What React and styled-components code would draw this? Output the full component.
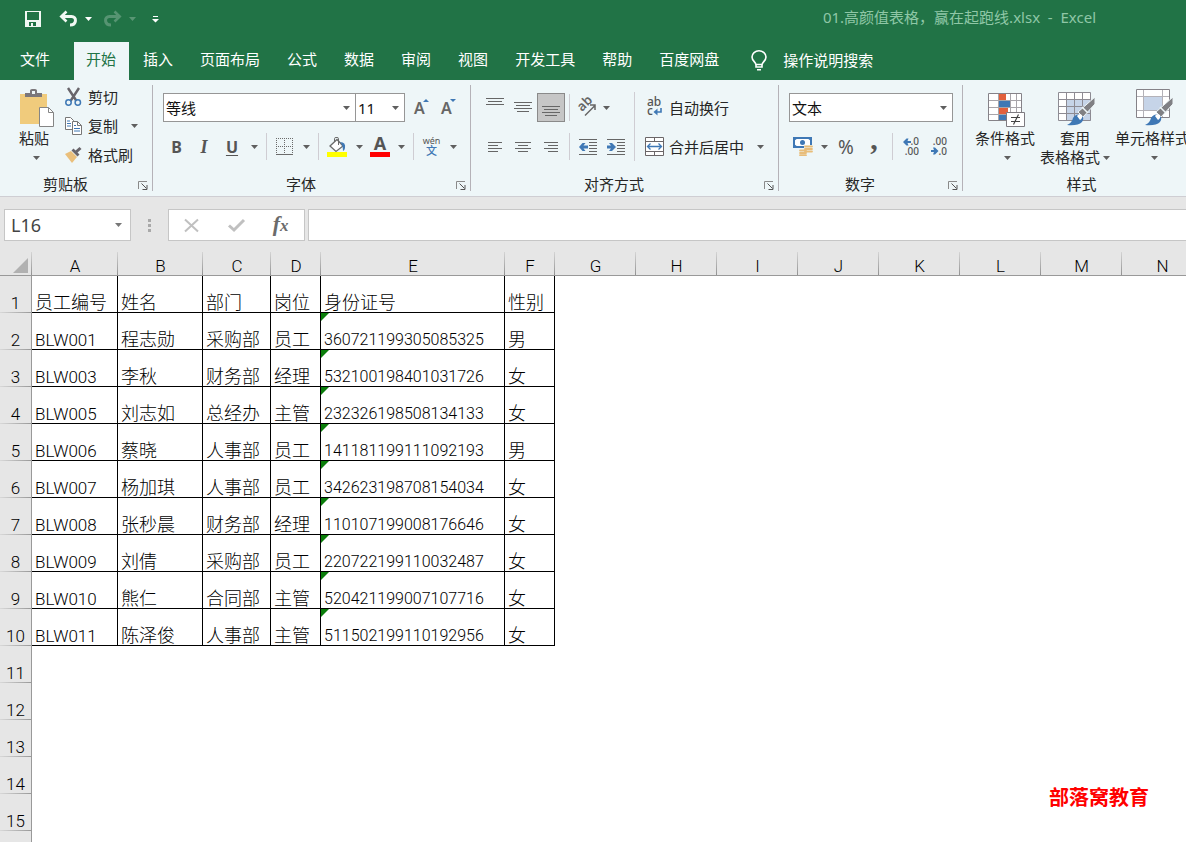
import React from "react";
import styled, { createGlobalStyle, css } from "styled-components";

const UI = `"Noto Sans", "Noto Sans CJK SC", sans-serif`;
const INK = "#262626";
const BLUE = "#3f78b5";

const Global = createGlobalStyle`
  *, *::before, *::after { box-sizing: border-box; }
  body { margin: 0; overflow: hidden; background: #fff; }
  button, input, select { font: inherit; color: inherit; border: 0; background: none; margin: 0; padding: 0; border-radius: 0; }
  svg { display: block; flex: none; overflow: visible; }
`;

const Window = styled.div`
  display: flex;
  flex-direction: column;
  height: 100vh;
  font: 15px/20px ${UI};
  color: ${INK};
`;

/* ---------- title bar and tabs ---------- */
const TitleBar = styled.header`
  display: flex;
  align-items: center;
  flex: none;
  height: 42px;
  padding: 0 90px 4px 24px;
  background: #217346;
  color: #f2f8f4;
`;
const QuickButton = styled.button`
  display: grid;
  place-items: center;
  height: 24px;
  width: ${(p) => p.$w}px;
  margin-right: ${(p) => p.$gap || 0}px;
  opacity: ${(p) => (p.disabled ? 0.25 : 1)};
`;
const FileTitle = styled.h1`
  margin: 0 0 0 auto;
  padding-bottom: 4px;
  font: 15px/20px ${UI};
  white-space: pre;
  color: #8fc7a6;
`;
const TabBar = styled.nav`
  display: flex;
  flex: none;
  height: 38px;
  background: #217346;
  color: #fff;
  overflow: hidden;
`;
const Tab = styled.button`
  flex: none;
  padding: 0 13px 4px 14px;
  ${(p) => p.$file && css`padding-left: 20px; padding-right: 12px; margin-right: 12px;`}
  ${(p) => p.$active && css`padding-left: 12px; background: #eef6f8; color: #217346;`}
`;
const TellMe = styled.button`
  display: flex;
  align-items: center;
  flex: none;
  gap: 16px;
  margin-left: 19px;
  padding-bottom: 2px;
`;

/* ---------- ribbon ---------- */
const Ribbon = styled.section`
  display: flex;
  flex: none;
  height: 117px;
  padding: 5px 0;
  background: #eef6f8;
  border-bottom: 1px solid #cfced3;
  overflow: hidden;
`;
const Group = styled.div`
  display: flex;
  flex-direction: column;
  flex: none;
  height: 106px;
  width: ${(p) => p.$w}px;
  border-right: 1px solid #b5b2b8;
`;
const GroupBody = styled.div`
  display: flex;
  flex: 1;
  padding-left: ${(p) => p.$left}px;
`;
const GroupFooter = styled.div`
  display: flex;
  align-items: center;
  height: 13px;
  padding-right: ${(p) => (p.$plain ? 0 : 4)}px;
`;
const GroupLabel = styled.span`
  flex: 1;
  line-height: 13px;
  text-align: center;
`;
const Launcher = styled.button`
  margin-left: 7px;
  padding-top: 2px;
`;
const Rows = styled.div`
  display: flex;
  flex-direction: column;
  gap: 10px;
  padding-top: 8px;
`;
const Row = styled.div`
  display: flex;
  align-items: center;
  height: ${(p) => p.$h || 29}px;
`;
const Tool = styled.button`
  display: grid;
  place-items: center;
  height: 29px;
  width: ${(p) => p.$w || 28}px;
  color: #555;
  ${(p) => p.$pressed && css`background: #c6c6c6; border: 1px solid #8a8a8a;`}
`;
const Letter = styled.span`
  font: ${(p) => (p.$italic ? "italic 700 18px/20px 'Liberation Serif', serif" : "700 16px/20px " + UI)};
  text-decoration: ${(p) => (p.$under ? "underline" : "none")};
  text-underline-offset: 2px;
`;
const BigSign = styled.span`
  height: 20px;
  font: ${(p) => (p.$serif ? "700 30px/4px 'Liberation Serif', serif" : "19px/20px " + UI)};
`;
const Sep = styled.i`
  flex: none;
  width: 1px;
  height: 27px;
  margin: 0 4px;
  background: #cfcdd3;
`;
const TallSep = styled(Sep)`
  height: 69px;
  margin-top: 7px;
`;
const SelectBox = styled.label`
  position: relative;
  display: block;
  height: 29px;
  width: ${(p) => p.$w}px;
  margin-left: ${(p) => (p.$joined ? -1 : 0)}px;
  background: #fff;
  border: 1px solid #969696;
  select { appearance: none; width: 100%; height: 27px; padding-left: 2px; color: #111; outline: 0; }
  svg { position: absolute; right: 5px; top: 12px; pointer-events: none; }
`;
const BigButton = styled.button`
  display: flex;
  flex-direction: column;
  align-items: center;
  width: ${(p) => p.$w}px;
  height: 86px;
  padding-top: 4px;
  line-height: 19px;
  white-space: nowrap;
  > svg { margin-bottom: 2px; }
`;
const CaretLine = styled.span`
  display: flex;
  align-items: center;
  justify-content: center;
  gap: 3px;
  height: 19px;
  padding-left: ${(p) => (p.$text ? 0 : 4)}px;
`;
const SmallList = styled.div`
  display: flex;
  flex-direction: column;
  gap: 5px;
  padding-left: 9px;
`;
const TextTool = styled.button`
  display: flex;
  align-items: center;
  gap: 6px;
  height: ${(p) => p.$h || 29}px;
  padding-left: ${(p) => p.$left || 0}px;
  white-space: nowrap;
`;

/* ---------- formula bar ---------- */
const FormulaBar = styled.section`
  display: flex;
  flex: none;
  height: 55px;
  padding: 12px 0 11px 4px;
  background: #e6e6e6;
`;
const NameBox = styled.label`
  display: flex;
  align-items: center;
  width: 127px;
  padding-right: 8px;
  background: #fff;
  border: 1px solid #c6c6c6;
  input { flex: 1; min-width: 0; padding-left: 6px; font: 18px/28px ${UI}; color: #444; outline: 0; }
`;
const Grip = styled.span`
  display: grid;
  place-items: center;
  width: 37px;
`;
const EntryButtons = styled.div`
  display: flex;
  width: 137px;
  margin-right: 3px;
  padding-right: 1px;
  background: #fff;
  border: 1px solid #c6c6c6;
  button { display: grid; place-items: center; flex: 1; color: #6b6b6b; }
`;
const Fx = styled.span`
  font: italic 700 22px/24px "Liberation Serif", serif;
  small { font-size: 17px; }
`;
const FormulaInput = styled.input`
  flex: 1;
  min-width: 0;
  && { background: #fff; border: 1px solid #c6c6c6; border-right: 0; padding: 0 6px; outline: 0; }
`;

/* ---------- sheet ---------- */
const SheetArea = styled.main`
  position: relative;
  flex: 1;
  min-height: 0;
  overflow: hidden;
  background: #fff;
`;
const Sheet = styled.table`
  table-layout: fixed;
  width: 1203px;
  border-spacing: 0;
  font: 300 18px/18px Roboto, "Noto Sans CJK SC", sans-serif;
  color: #000;
`;
const ColHead = styled.th`
  height: 24px;
  padding: 5px 0 0;
  font-size: 17px;
  font-weight: 300;
  line-height: 18px;
  border-bottom: 1px solid #999;
  background: linear-gradient(#d4d4d4, #929292) right / 1px 100% no-repeat #e6e6e6;
  svg { margin: 0 0 1px 13px; }
`;
const RowHead = styled.th`
  height: 37px;
  padding: 0 0 1px;
  font-size: 17px;
  font-weight: 300;
  vertical-align: bottom;
  border-right: 1px solid #999;
  background: linear-gradient(90deg, #d8d8d8, #999) bottom / 100% 1px no-repeat #e6e6e6;
`;
const Cell = styled.td`
  position: relative;
  height: 37px;
  padding: 0 0 0 3px;
  vertical-align: bottom;
  white-space: nowrap;
  font-size: ${(p) => p.$size}px;
  ${(p) => p.$filled && css`border-right: 1px solid #000; border-bottom: 1px solid #000;`}
  ${(p) =>
    p.$flag &&
    css`
      &::before { content: ""; position: absolute; left: 0; top: 0; border-top: 8px solid #0a7d0a; border-right: 8px solid transparent; }
    `}
`;
const Stamp = styled.div`
  position: absolute;
  right: 37px;
  bottom: 34px;
  font: 700 20px/22px "AR PL UKai CN", "KaiTi", "Noto Sans CJK SC", serif;
  color: #f00;
`;

/* ---------- icons ---------- */
const Svg = ({ w, h, children, ...rest }) => (
  <svg width={w} height={h} viewBox={`0 0 ${w} ${h}`} fill="none" aria-hidden="true" {...rest}>{children}</svg>
);
/* large ribbon icon: 38 high, artwork inset from the left by `inset` */
const BigSvg = ({ w, inset, children }) => (
  <Svg w={w + inset} h={38}><g transform={`translate(${inset} 0)`}>{children}</g></Svg>
);
const Caret = ({ color = "#5f5f5f" }) => <Svg w={7} h={4}><path d="M0 0h7L3.5 4z" fill={color} /></Svg>;
const CaretTool = ({ label }) => <Tool $w={16} aria-label={label}><Caret /></Tool>;
const LaunchIcon = () => (
  <Svg w={10} h={9} stroke="#555"><path d="M.5 8V.5H9" stroke="#8a8a8a" /><path d="M3.5 2.5l5 5M9 4v4.5H4.5" /></Svg>
);
const SaveIcon = () => (
  <Svg w={17} h={16}><path fillRule="evenodd" fill="currentColor" d="M0 0h16v16H0zM2 1v8h12V1zM4 11v4h2v-3h2v3h3v-4z" /></Svg>
);
const UndoIcon = ({ flip }) => (
  <Svg w={19} h={16} stroke="currentColor" strokeWidth="3">
    <g transform={flip ? "matrix(-1 0 0 1 19 0)" : undefined}>
      <path d="M2 5.5h10.5c5.5 0 5.5 8.5-1.5 8.5" /><path d="M7.5.5L2.3 5.5l5.2 5" strokeWidth="2.6" />
    </g>
  </Svg>
);
const MoreIcon = () => <Svg w={7} h={7}><path d="M1 0h5v1H1zM0 3h7L3.5 6.5z" fill="#fff" /></Svg>;
const BulbIcon = () => (
  <Svg w={16} h={21} stroke="#fff" strokeWidth="1.6">
    <path d="M5 15c0-3-4-4-4-8a7 6.3 0 0 1 14 0c0 4-4 5-4 8v2H5zM5 14.5h6M6 19.8h4" />
  </Svg>
);
const PasteIcon = () => (
  <BigSvg w={34} inset={6}>
    <path d="M0 5h27v30H0z" fill="#f0cb7c" />
    <path d="M5 8V4h5V1.5Q10 0 12 0h3q2 0 2 1.5V4h5v4z" fill="#7b777b" /><path d="M12 2h3v3h-3z" fill="#eef6f8" />
    <path d="M19.5 18.5h9l5 5v14h-14z" fill="#fff" stroke="#858585" /><path d="M28.5 18.5v5h5" stroke="#858585" />
  </BigSvg>
);
const CutIcon = () => (
  <Svg w={17} h={19}>
    <path d="M3 0l8.5 13M14 0L5.5 13" stroke="#68646a" strokeWidth="2.4" />
    <circle cx="3.5" cy="14.5" r="2.7" stroke={BLUE} strokeWidth="1.5" /><circle cx="12.8" cy="14.5" r="2.7" stroke={BLUE} strokeWidth="1.5" />
  </Svg>
);
const CopyIcon = () => (
  <Svg w={17} h={18}>
    <path d="M.5.5h5l3 3v9h-8z" fill="#fff" stroke="#777" /><path d="M2 4h3M2 6.5h4M2 9h4" stroke={BLUE} />
    <path d="M7.5 4.5h5l4 4v9h-9z" fill="#fff" stroke="#777" /><path d="M12.5 4.5v4h4" stroke="#777" />
    <path d="M9 8.5h2M9 11.5h6M9 14h6" stroke={BLUE} />
  </Svg>
);
const BrushIcon = () => (
  <Svg w={17} h={16}>
    <path d="M0 7l6-3 6 6-5 6z" fill="#eabf7b" /><path d="M6.5 3.5l2-2 6 6-2 2z" fill="#68646a" />
    <path d="M11 5l4.5-4" stroke="#68646a" strokeWidth="3" />
  </Svg>
);
const GrowIcon = ({ down }) => (
  <Svg w={16} h={20}>
    <text x="0" y="16" fill="#666" fontFamily="Noto Sans" fontWeight="600" fontSize="16">A</text>
    <path d={down ? "M9 1h6l-3 3z" : "M9 4h6l-3-3z"} fill={BLUE} />
  </Svg>
);
const BorderIcon = () => (
  <Svg w={17} h={17} stroke="#6b6b6b">
    <path d="M.5 0v16M8.5 0v16M16.5 0v16M0 .5h17M0 8.5h17" strokeDasharray="1 1" /><path d="M0 16.5h17" />
  </Svg>
);
const FillIcon = () => (
  <Svg w={20} h={20}>
    <path d="M3 9l7-6.5 6 6.5-7 5.5z" fill="#fff" stroke="#6b6b6b" strokeWidth="1.3" />
    <path d="M7.5 5V1.5q0-1 1.500-1h1q1.500 0 1.500 1V8" stroke="#6b6b6b" />
    <path d="M13 5q6 0 5 6-.5 3-2 3 0-6-3-9z" fill={BLUE} /><path d="M0 15h20v5H0z" fill="#ff0" />
  </Svg>
);
const FontColorIcon = () => (
  <Svg w={20} h={20}>
    <text x="10" y="13" textAnchor="middle" fill="#555" fontFamily="Noto Sans" fontWeight="700" fontSize="18">A</text>
    <path d="M0 15h20v5H0z" fill="red" />
  </Svg>
);
const PhoneticIcon = () => (
  <Svg w={17} h={20}>
    <text x="8.5" y="7" textAnchor="middle" fill="#555" fontFamily="Noto Sans" fontSize="9">wén</text>
    <text x="8.5" y="18" textAnchor="middle" fill={BLUE} fontFamily="Noto Sans CJK SC" fontWeight="500" fontSize="11">文</text>
  </Svg>
);
/* each entry is [x, y, length] of one text line */
const Lines = ({ w, h, rows, children }) => (
  <Svg w={w} h={h}>{rows.map(([x, y, l]) => <path key={y + "-" + x} d={`M${x} ${y}h${l}v1h-${l}z`} fill="#666" />)}{children}</Svg>
);
const vAlign = (dy, extra) => [[0, dy, 18], [2, dy + 3, 14], [0, dy + 6, 18], ...(extra ? [[3, dy + 9, 12]] : [])];
const hAlign = (side) => [0, 1, 2, 3].map((i) => {
  const l = i % 2 ? 10 : side === "c" ? 16 : 14;
  return [side === "l" ? 0 : side === "r" ? 14 - l : (16 - l) / 2, i * 3, l];
});
const IndentIcon = ({ right }) => (
  <Lines w={18} h={16} rows={[[0, 0, 18], [10, 3, 8], [10, 6, 8], [10, 9, 8], [10, 12, 8], [0, 15, 18]]}>
    <path d={right ? "M0 6.5h4L2 4h3l4 4-4 4H2l2-2.5H0z" : "M9 6.5H4.5L6.5 4h-3L0 8l3.5 4h3l-2-2.5H9z"} fill={BLUE} />
  </Lines>
);
const OrientIcon = () => (
  <Svg w={20} h={19}>
    <text x="6" y="14" transform="rotate(-45 6 14)" fill="#666" fontFamily="Noto Sans" fontWeight="600" fontSize="13">ab</text>
    <path d="M9 17.5L19 7.5M14 7h5v5" stroke="#666" strokeWidth="1.5" />
  </Svg>
);
const WrapIcon = () => (
  <Svg w={18} h={19}>
    <text x="2" y="8" fill="#555" fontFamily="Noto Sans" fontWeight="500" fontSize="12">ab</text>
    <text x="2" y="17" fill="#555" fontFamily="Noto Sans" fontWeight="500" fontSize="12">c</text>
    <path d="M16 10v4h-5" stroke={BLUE} strokeWidth="1.6" /><path d="M8.5 14l4-3.5v7z" fill={BLUE} />
  </Svg>
);
const MergeIcon = () => (
  <Svg w={18} h={19}>
    <path d="M.5.5h18v18H.5zM0 4.5h19M0 14.5h19M9.5 0v4M9.5 15v4" fill="#fff" stroke="#6b6668" />
    <path d="M3 9.5h13M5.5 6.5l-3 3 3 3M13.5 6.5l3 3-3 3" stroke={BLUE} strokeWidth="1.3" />
  </Svg>
);
const MoneyIcon = () => (
  <Svg w={20} h={19}>
    <path d="M1 1h17v9H1z" fill="#fff" stroke={BLUE} strokeWidth="2" /><path d="M1 1h4L1 4zM18 1h-4l4 3zM1 10h4L1 7z" fill={BLUE} />
    <circle cx="9.5" cy="5.5" r="2.5" fill={BLUE} />
    <path d="M11 8h9v11h-9zM6 12h8v7H6z" fill="#eef6f8" />
    <path d="M12 9.5h7M12 12h7M12 14.5h7M7 13.5h6M7 16h6M7 18.2h6" stroke="#e8bd7a" strokeWidth="1.8" strokeLinecap="round" />
  </Svg>
);
const DecimalIcon = ({ less }) => (
  <Svg w={16} h={18} fontFamily="Noto Sans" fontWeight="500" fontSize="10">
    <text x="16" y="7" textAnchor="end" fill="#555">{less ? ".00" : ".0"}</text>
    <text x="16" y="17" textAnchor="end" fill="#555">{less ? ".0" : ".00"}</text>
    <path d={less ? "M0 12h3l-1-2.5h2L7.5 13 4 16.5H2L3 14H0z" : "M8 3H4.5l1-2.5h-2L0 4l3.5 3.5h2l-1-2.5H8z"} fill={BLUE} />
  </Svg>
);
const Brush = () => (
  <g>
    <path d="M37 8v7L25 28l-5-5z" fill="#808084" stroke="#eef6f8" />
    <path d="M24 18l6 6" stroke="#eef6f8" strokeWidth="1.5" />
    <path d="M9 36q5-2 6-7 3-5 8-3 4 3 1 7-4 4-15 3z" fill={BLUE} /><path d="M19 27q2-3 5-1 1 3-2 5z" fill="#fff" />
  </g>
);
const CondIcon = () => (
  <BigSvg w={38} inset={4}>
    <path d="M.5 4.5h33v27H.5z" fill="#fff" stroke="#858288" />
    <path d="M10.5 5v26M22.5 5v26M28.5 5v26M1 11.5h32M1 18.5h32M1 25.5h32" stroke="#a8a5aa" />
    <path d="M11 5h7v6h-7zM11 19h9v6h-9z" fill="#e2603c" /><path d="M11 12h11v6H11zM11 26h7v5h-7z" fill={BLUE} />
    <path d="M18.5 23.5h18v14h-18z" fill="#fff" stroke="#7d7a80" />
    <path d="M23 28.5h9M23 32.5h9M30.5 25.5l-5 10" stroke="#444" strokeWidth="1.2" />
  </BigSvg>
);
const TableIcon = () => (
  <BigSvg w={38} inset={4}>
    <path d="M.5 3.5h32v28H.5z" fill="#fff" /><path d="M9 11h24v21H9z" fill="#c6d4e8" />
    <path d="M.5 3.5h32v28H.5zM8.5 4v27M16.5 4v27M24.5 4v27M1 10.5h32M1 17.5h32M1 24.5h32" stroke="#8d8b93" /><Brush />
  </BigSvg>
);
const CellStyleIcon = () => (
  <BigSvg w={38} inset={4}>
    <path d="M.5.5h33v28H.5z" fill="#fff" stroke="#858288" /><path d="M7 8h20v13H7z" fill="#c6d4e8" />
    <path d="M7.5 1v27M26.5 1v27M1 7.5h32M1 21.5h32" stroke="#b4b2b8" /><Brush />
  </BigSvg>
);

/* ---------- data ---------- */
const TABS = ["文件", "开始", "插入", "页面布局", "公式", "数据", "审阅", "视图", "开发工具", "帮助", "百度网盘"];
const COLUMNS = [["A", 86], ["B", 85], ["C", 68], ["D", 50], ["E", 184], ["F", 50], ["G", 81], ["H", 81], ["I", 81], ["J", 81], ["K", 81], ["L", 81], ["M", 81], ["N", 81]];
const DATA = [
  ["员工编号", "姓名", "部门", "岗位", "身份证号", "性别"],
  ["BLW001", "程志勋", "采购部", "员工", "360721199305085325", "男"],
  ["BLW003", "李秋", "财务部", "经理", "532100198401031726", "女"],
  ["BLW005", "刘志如", "总经办", "主管", "232326198508134133", "女"],
  ["BLW006", "蔡晓", "人事部", "员工", "141181199111092193", "男"],
  ["BLW007", "杨加琪", "人事部", "员工", "342623198708154034", "女"],
  ["BLW008", "张秒晨", "财务部", "经理", "110107199008176646", "女"],
  ["BLW009", "刘倩", "采购部", "员工", "220722199110032487", "女"],
  ["BLW010", "熊仁", "合同部", "主管", "520421199007107716", "女"],
  ["BLW011", "陈泽俊", "人事部", "主管", "511502199110192956", "女"],
];
const cellSize = (r, c) => (r === 0 ? 18 : c === 0 ? 17 : c === 4 ? 16 : 18);

const RibbonGroup = ({ width, left, label, plain, children }) => (
  <Group $w={width}>
    <GroupBody $left={left}>{children}</GroupBody>
    <GroupFooter $plain={plain}>
      <GroupLabel>{label}</GroupLabel>
      {!plain && <Launcher aria-label={`${label}设置`}><LaunchIcon /></Launcher>}
    </GroupFooter>
  </Group>
);
const Picker = ({ width, label, value, joined }) => (
  <SelectBox $w={width} $joined={joined}>
    <select aria-label={label} defaultValue={value}><option>{value}</option></select>
    <Caret />
  </SelectBox>
);

export default function App() {
  return (
    <Window>
      <Global />
      <TitleBar>
        <QuickButton $w={18} $gap={14} aria-label="保存"><SaveIcon /></QuickButton>
        <QuickButton $w={24} aria-label="撤消"><UndoIcon /></QuickButton>
        <QuickButton $w={16} aria-label="撤消列表"><Caret color="#fff" /></QuickButton>
        <QuickButton $w={32} disabled aria-label="恢复"><UndoIcon flip /></QuickButton>
        <QuickButton $w={8} disabled aria-label="恢复列表"><Caret color="#fff" /></QuickButton>
        <QuickButton $w={38} aria-label="自定义快速访问工具栏"><MoreIcon /></QuickButton>
        <FileTitle>{"01.高颜值表格，赢在起跑线.xlsx  -  Excel"}</FileTitle>
      </TitleBar>
      <TabBar>
        {TABS.map((t, i) => <Tab key={t} $file={i === 0} $active={i === 1}>{t}</Tab>)}
        <TellMe><BulbIcon />操作说明搜索</TellMe>
      </TabBar>

      <Ribbon>
        <RibbonGroup width={153} left={12} label="剪贴板">
          <BigButton $w={44}><PasteIcon />粘贴<CaretLine><Caret /></CaretLine></BigButton>
          <SmallList>
            <TextTool $h={24}><CutIcon />剪切</TextTool>
            <Row $h={24}><TextTool $h={24}><CopyIcon />复制</TextTool><Tool $w={32} aria-label="复制选项"><Caret /></Tool></Row>
            <TextTool $h={24}><BrushIcon />格式刷</TextTool>
          </SmallList>
        </RibbonGroup>

        <RibbonGroup width={318} left={10} label="字体">
          <Rows>
            <Row>
              <Picker width={193} label="字体" value="等线" />
              <Picker width={50} label="字号" value="11" joined />
              <Tool $w={33} aria-label="增大字号"><GrowIcon /></Tool>
              <Tool $w={22} aria-label="减小字号"><GrowIcon down /></Tool>
            </Row>
            <Row>
              <Tool $w={27} aria-label="加粗"><Letter>B</Letter></Tool>
              <Tool aria-label="倾斜"><Letter $italic>I</Letter></Tool>
              <Tool aria-label="下划线"><Letter $under>U</Letter></Tool>
              <CaretTool label="下划线选项" />
              <Sep />
              <Tool $w={27} aria-label="边框"><BorderIcon /></Tool>
              <CaretTool label="边框选项" />
              <Sep />
              <Tool aria-label="填充颜色"><FillIcon /></Tool>
              <CaretTool label="填充颜色选项" />
              <Tool $w={26} aria-label="字体颜色"><FontColorIcon /></Tool>
              <CaretTool label="字体颜色选项" />
              <Sep />
              <Tool $w={27} aria-label="拼音指南"><PhoneticIcon /></Tool>
              <CaretTool label="拼音选项" />
            </Row>
          </Rows>
        </RibbonGroup>

        <RibbonGroup width={308} left={10} label="对齐方式">
          <Rows>
            <Row>
              <Tool aria-label="顶端对齐"><Lines w={18} h={19} rows={vAlign(0)} /></Tool>
              <Tool aria-label="垂直居中"><Lines w={18} h={19} rows={vAlign(4, true)} /></Tool>
              <Tool $pressed aria-label="底端对齐"><Lines w={18} h={19} rows={vAlign(8, true)} /></Tool>
              <Sep />
              <Tool $w={24} aria-label="方向"><OrientIcon /></Tool>
              <CaretTool label="方向选项" />
            </Row>
            <Row>
              <Tool aria-label="左对齐"><Lines w={14} h={10} rows={hAlign("l")} /></Tool>
              <Tool aria-label="居中"><Lines w={16} h={10} rows={hAlign("c")} /></Tool>
              <Tool aria-label="右对齐"><Lines w={14} h={10} rows={hAlign("r")} /></Tool>
              <Sep />
              <Tool aria-label="减少缩进量"><IndentIcon /></Tool>
              <Tool aria-label="增加缩进量"><IndentIcon right /></Tool>
            </Row>
          </Rows>
          <TallSep />
          <Rows>
            <TextTool $left={6}><WrapIcon />自动换行</TextTool>
            <Row><TextTool $left={6}><MergeIcon />合并后居中</TextTool><Tool $w={32} aria-label="合并选项"><Caret /></Tool></Row>
          </Rows>
        </RibbonGroup>

        <RibbonGroup width={184} left={10} label="数字">
          <Rows>
            <Row><Picker width={164} label="数字格式" value="文本" /></Row>
            <Row>
              <Tool $w={27} aria-label="会计数字格式"><MoneyIcon /></Tool>
              <CaretTool label="会计格式选项" />
              <Tool aria-label="百分比"><BigSign>%</BigSign></Tool>
              <Tool aria-label="千位分隔"><BigSign $serif>,</BigSign></Tool>
              <Sep />
              <Tool aria-label="增加小数位数"><DecimalIcon /></Tool>
              <Tool aria-label="减少小数位数"><DecimalIcon less /></Tool>
            </Row>
          </Rows>
        </RibbonGroup>

        <RibbonGroup width={238} left={7} label="样式" plain>
          <BigButton $w={70}><CondIcon />条件格式<CaretLine><Caret /></CaretLine></BigButton>
          <BigButton $w={70}><TableIcon />套用<CaretLine $text>表格格式<Caret /></CaretLine></BigButton>
          <BigButton $w={85}><CellStyleIcon />单元格样式<CaretLine><Caret /></CaretLine></BigButton>
        </RibbonGroup>
      </Ribbon>

      <FormulaBar>
        <NameBox><input aria-label="名称框" defaultValue="L16" /><Caret color="#777" /></NameBox>
        <Grip><Svg w={3} h={13}><path d="M0 0h3v3H0zM0 5h3v3H0zM0 10h3v3H0z" fill="#a9a9a9" /></Svg></Grip>
        <EntryButtons>
          <button aria-label="取消"><Svg w={15} h={13} stroke="#c0c0c0" strokeWidth="2"><path d="M1 .5l13 12M14 .5l-13 12" /></Svg></button>
          <button aria-label="输入"><Svg w={17} h={13} stroke="#c0c0c0" strokeWidth="3"><path d="M1 6.5l5 4.5L16 1" /></Svg></button>
          <button aria-label="插入函数"><Fx>f<small>x</small></Fx></button>
        </EntryButtons>
        <FormulaInput aria-label="编辑栏" />
      </FormulaBar>

      <SheetArea>
        <Sheet>
          <colgroup>
            <col style={{ width: 32 }} />
            {COLUMNS.map(([name, w]) => <col key={name} style={{ width: w }} />)}
          </colgroup>
          <thead>
            <tr>
              <ColHead aria-label="全选"><Svg w={15} h={15}><path d="M15 0v15H0z" fill="#b1b1b1" /></Svg></ColHead>
              {COLUMNS.map(([name]) => <ColHead key={name} scope="col">{name}</ColHead>)}
            </tr>
          </thead>
          <tbody>
            {Array.from({ length: 16 }, (_, r) => (
              <tr key={r}>
                <RowHead scope="row">{r + 1}</RowHead>
                {COLUMNS.map(([name], c) => {
                  const value = DATA[r]?.[c];
                  return (
                    <Cell key={name} $filled={value !== undefined} $size={cellSize(r, c)} $flag={c === 4 && r > 0 && r < DATA.length}>
                      {value}
                    </Cell>
                  );
                })}
              </tr>
            ))}
          </tbody>
        </Sheet>
        <Stamp>部落窝教育</Stamp>
      </SheetArea>
    </Window>
  );
}
